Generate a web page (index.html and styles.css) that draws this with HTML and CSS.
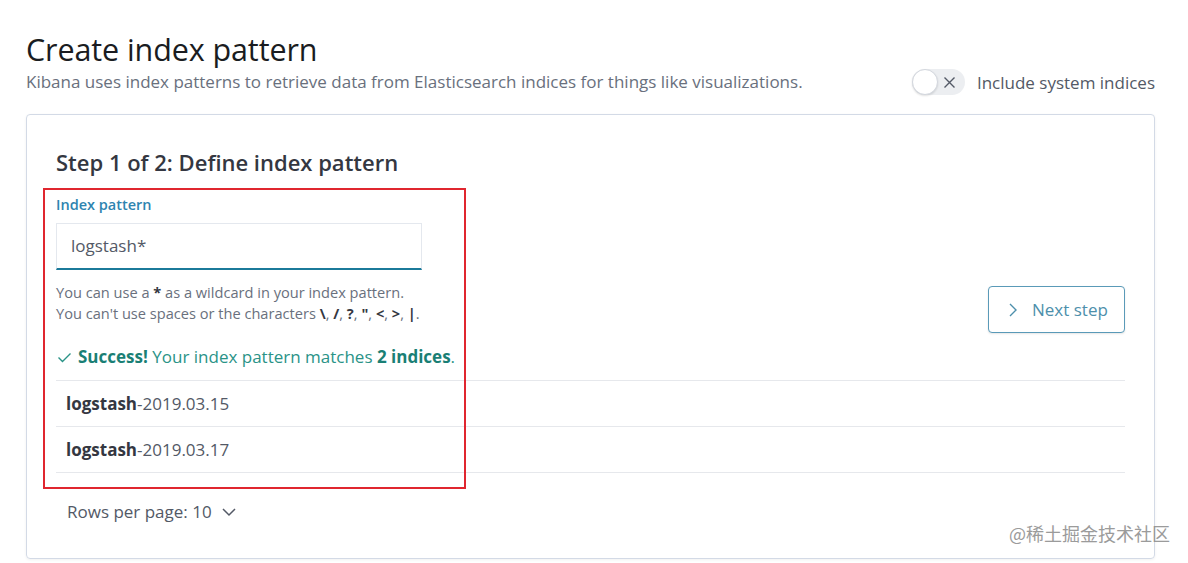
FILE: index.html
```html
<!DOCTYPE html>
<html>
<head>
<meta charset="utf-8">
<link rel="stylesheet" href="styles.css">
</head>
<body>
<div class="page">
  <h1 class="title">Create index pattern</h1>
  <div class="subrow">
    <p class="subtitle">Kibana uses index patterns to retrieve data from Elasticsearch indices for things like visualizations.</p>
    <div class="switch-wrap">
      <span class="switch">
        <span class="knob"></span>
        <svg class="switch-x" width="13" height="13" viewBox="0 0 13 13"><path d="M1.5 1.5 L11.5 11.5 M11.5 1.5 L1.5 11.5" stroke="#535966" stroke-width="1.4" fill="none"/></svg>
      </span>
      <span class="switch-label">Include system indices</span>
    </div>
  </div>
  <div class="panel">
    <h2 class="step">Step 1 of 2: Define index pattern</h2>
    <div class="body">
      <div class="left">
        <div class="highlight"></div>
        <label class="label">Index pattern</label>
        <div class="input">logstash*</div>
        <p class="help">You can use a <b>*</b> as a wildcard in your index pattern.<br>You can't use spaces or the characters <b>\</b>, <b>/</b>, <b>?</b>, <b>"</b>, <b>&lt;</b>, <b>&gt;</b>, <b>|</b>.</p>
      </div>
      <div class="right">
        <button class="next">
          <svg width="12" height="16" viewBox="0 0 12 16"><path d="M3 2 L9 8 L3 14" stroke="#4d8fab" stroke-width="1.4" fill="none"/></svg>
          <span>Next step</span>
        </button>
      </div>
    </div>
    <div class="success">
      <svg width="17" height="16" viewBox="0 0 17 16"><path d="M2.5 8.5 L6.5 12.5 L14.5 4.5" stroke="#2a9387" stroke-width="1.4" fill="none"/></svg>
      <span><b>Success!</b> Your index pattern matches <b>2 indices</b>.</span>
    </div>
    <div class="table">
      <div class="row"><b>logstash</b>-2019.03.15</div>
      <div class="row"><b>logstash</b>-2019.03.17</div>
    </div>
    <div class="pager">
      <span>Rows per page: 10</span>
      <svg width="18" height="16" viewBox="0 0 18 16"><path d="M3 5 L9 11 L15 5" stroke="#535966" stroke-width="1.5" fill="none"/></svg>
    </div>
    <div class="watermark">@稀土掘金技术社区</div>
  </div>
</div>
</body>
</html>
```
FILE: styles.css
```css
* { box-sizing: border-box; }
html, body { margin: 0; padding: 0; background: #fff; }
body {
  font-family: "Open Sans", "Noto Sans", sans-serif;
  color: #343741;
  width: 1188px;
  height: 563px;
  overflow: hidden;
}
.page {
  padding: 28px 33px 0 26px;
}
.title {
  margin: 0;
  font-size: 30.5px;
  font-weight: 400;
  line-height: 42px;
  color: #1a1c21;
  letter-spacing: -0.1px;
}
.subrow {
  display: flex;
  align-items: center;
  justify-content: space-between;
  margin-top: -1px;
  height: 26px;
}
.subtitle {
  margin: 0;
  font-size: 17px;
  color: #69707d;
  line-height: 24px;
}
.switch-wrap {
  display: flex;
  align-items: center;
  gap: 12px;
}
.switch {
  position: relative;
  display: inline-block;
  width: 53px;
  height: 26px;
  border-radius: 13px;
  background: #eceef1;
}
.knob {
  position: absolute;
  left: 0;
  top: 0;
  width: 26px;
  height: 26px;
  border-radius: 50%;
  background: #fff;
  border: 1px solid #d3d7de;
  box-shadow: 0 1px 2px rgba(0,0,0,0.12);
}
.switch-x {
  position: absolute;
  right: 9px;
  top: 6.5px;
}
.switch-label {
  font-size: 17px;
  color: #535966;
}
.panel {
  position: relative;
  margin-top: 19px;
  border: 1px solid #d3dae6;
  border-radius: 4px;
  box-shadow: 0 1px 3px rgba(0,0,0,0.06);
  height: 445px;
  padding: 32px 29px 0 29px;
}
.step {
  margin: 0;
  font-size: 22px;
  font-weight: 600;
  line-height: 30px;
  color: #343741;
}
.body {
  display: flex;
  justify-content: space-between;
  margin-top: 18px;
}
.left {
  position: relative;
  width: 366px;
}
.highlight {
  position: absolute;
  left: -13px;
  top: -7px;
  width: 423px;
  height: 301px;
  border: 2px solid #e0262f;
  pointer-events: none;
}
.label {
  display: block;
  font-size: 14.5px;
  font-weight: 600;
  color: #2e84b0;
  line-height: 20px;
}
.input {
  margin-top: 8px;
  height: 47px;
  border: 1px solid #e4e8ee;
  border-bottom: 2px solid #1b7a9a;
  background: #fff;
  padding: 0 14px;
  font-size: 17px;
  line-height: 44px;
  color: #535966;
}
.help {
  margin: 12px 0 0 0;
  font-size: 14.6px;
  line-height: 21px;
  color: #69707d;
  white-space: nowrap;
}
.help b { color: #343741; }
.right {
  padding-top: 91px;
}
.next {
  display: flex;
  align-items: center;
  gap: 13px;
  height: 47px;
  width: 137px;
  padding: 0 0 0 18px;
  border: 1px solid #5a9ab8;
  border-radius: 4px;
  background: #fff;
  font-family: inherit;
  font-size: 17px;
  color: #4d8fab;
  box-shadow: 0 1px 2px rgba(0,0,0,0.1);
}
.success {
  display: flex;
  align-items: center;
  gap: 5px;
  margin-top: 12px;
  font-size: 17px;
  color: #2a9387;
  line-height: 24px;
}
.success b { font-weight: 700; color: #1a7f75; }
.table {
  margin-top: 11px;
  border-top: 1px solid #e6e8ec;
}
.row {
  height: 46px;
  border-bottom: 1px solid #e6e8ec;
  padding: 0 10px;
  font-size: 17px;
  line-height: 45px;
  color: #535966;
}
.row b { color: #343741; }
.pager {
  display: flex;
  align-items: center;
  gap: 8px;
  margin-top: 27px;
  padding-left: 11px;
  font-size: 17px;
  line-height: 24px;
  color: #535966;
}
.watermark {
  position: absolute;
  right: -16px;
  bottom: 12px;
  font-family: "Noto Sans CJK SC", sans-serif;
  font-size: 18px;
  color: #8a8a8a;
  opacity: 0.85;
}
```
